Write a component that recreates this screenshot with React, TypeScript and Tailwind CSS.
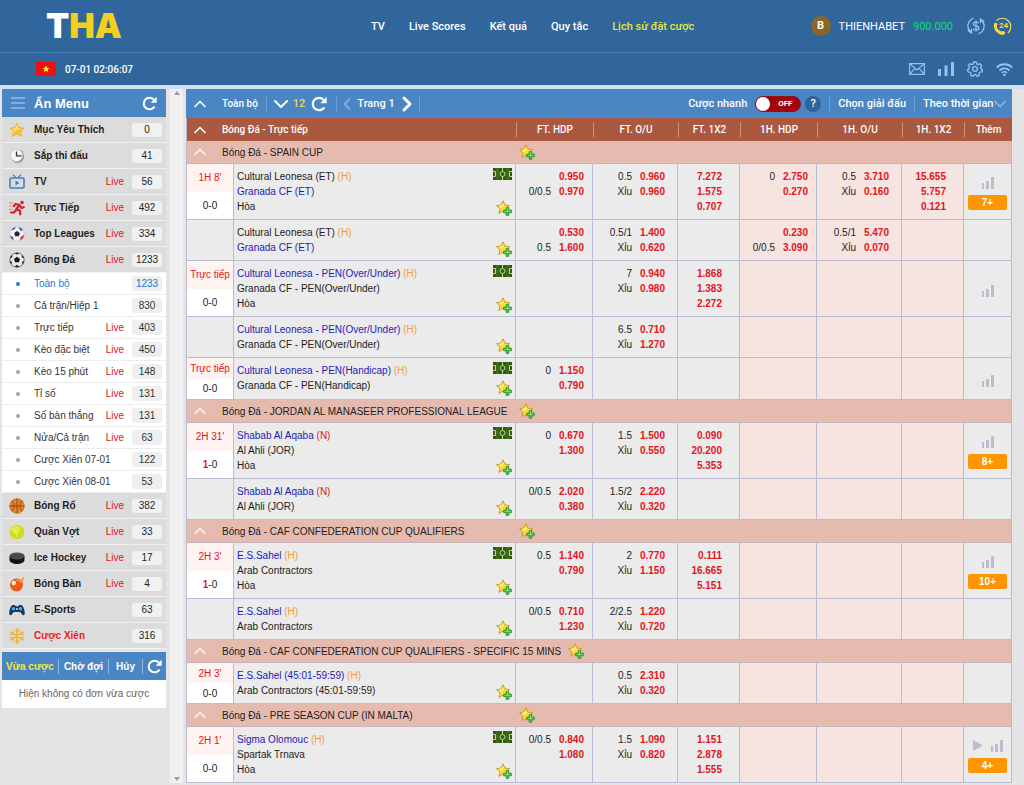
import { useState, type ReactNode } from 'react'
import { ChevronDown, ChevronLeft, ChevronRight, ChevronUp } from 'lucide-react'

type Pair = [string, string]

type Match = {
  time?: string
  score?: string
  home: string
  away: string
  tag: 'H' | 'N'
  fav: 'home' | 'away'
  draw?: boolean
  pitch?: boolean
  hdp?: Pair[]
  ou?: Pair[]
  x12?: string[]
  hdp1?: Pair[]
  ou1?: Pair[]
  x121?: string[]
  stats?: boolean
  play?: boolean
  more?: string
}

type League = { name: string; matches: Match[] }

const leagues: League[] = [
  {
    name: 'SPAIN CUP',
    matches: [
      {
        time: "1H 8'",
        score: '0-0',
        home: 'Cultural Leonesa (ET)',
        away: 'Granada CF (ET)',
        tag: 'H',
        fav: 'away',
        draw: true,
        pitch: true,
        hdp: [['', '0.950'], ['0/0.5', '0.970']],
        ou: [['0.5', '0.960'], ['Xỉu', '0.960']],
        x12: ['7.272', '1.575', '0.707'],
        hdp1: [['0', '2.750'], ['', '0.270']],
        ou1: [['0.5', '3.710'], ['Xỉu', '0.160']],
        x121: ['15.655', '5.757', '0.121'],
        stats: true,
        more: '7+',
      },
      {
        home: 'Cultural Leonesa (ET)',
        away: 'Granada CF (ET)',
        tag: 'H',
        fav: 'away',
        hdp: [['', '0.530'], ['0.5', '1.600']],
        ou: [['0.5/1', '1.400'], ['Xỉu', '0.620']],
        hdp1: [['', '0.230'], ['0/0.5', '3.090']],
        ou1: [['0.5/1', '5.470'], ['Xỉu', '0.070']],
      },
      {
        time: 'Trực tiếp',
        score: '0-0',
        home: 'Cultural Leonesa - PEN(Over/Under)',
        away: 'Granada CF - PEN(Over/Under)',
        tag: 'H',
        fav: 'home',
        draw: true,
        pitch: true,
        ou: [['7', '0.940'], ['Xỉu', '0.980']],
        x12: ['1.868', '1.383', '2.272'],
        stats: true,
      },
      {
        home: 'Cultural Leonesa - PEN(Over/Under)',
        away: 'Granada CF - PEN(Over/Under)',
        tag: 'H',
        fav: 'home',
        ou: [['6.5', '0.710'], ['Xỉu', '1.270']],
      },
      {
        time: 'Trực tiếp',
        score: '0-0',
        home: 'Cultural Leonesa - PEN(Handicap)',
        away: 'Granada CF - PEN(Handicap)',
        tag: 'H',
        fav: 'home',
        pitch: true,
        hdp: [['0', '1.150'], ['', '0.790']],
        stats: true,
      },
    ],
  },
  {
    name: 'JORDAN AL MANASEER PROFESSIONAL LEAGUE',
    matches: [
      {
        time: "2H 31'",
        score: '1-0',
        home: 'Shabab Al Aqaba',
        away: 'Al Ahli (JOR)',
        tag: 'N',
        fav: 'home',
        draw: true,
        pitch: true,
        hdp: [['0', '0.670'], ['', '1.300']],
        ou: [['1.5', '1.500'], ['Xỉu', '0.550']],
        x12: ['0.090', '20.200', '5.353'],
        stats: true,
        more: '8+',
      },
      {
        home: 'Shabab Al Aqaba',
        away: 'Al Ahli (JOR)',
        tag: 'N',
        fav: 'home',
        hdp: [['0/0.5', '2.020'], ['', '0.380']],
        ou: [['1.5/2', '2.220'], ['Xỉu', '0.320']],
      },
    ],
  },
  {
    name: 'CAF CONFEDERATION CUP QUALIFIERS',
    matches: [
      {
        time: "2H 3'",
        score: '1-0',
        home: 'E.S.Sahel',
        away: 'Arab Contractors',
        tag: 'H',
        fav: 'home',
        draw: true,
        pitch: true,
        hdp: [['0.5', '1.140'], ['', '0.790']],
        ou: [['2', '0.770'], ['Xỉu', '1.150']],
        x12: ['0.111', '16.665', '5.151'],
        stats: true,
        more: '10+',
      },
      {
        home: 'E.S.Sahel',
        away: 'Arab Contractors',
        tag: 'H',
        fav: 'home',
        hdp: [['0/0.5', '0.710'], ['', '1.230']],
        ou: [['2/2.5', '1.220'], ['Xỉu', '0.720']],
      },
    ],
  },
  {
    name: 'CAF CONFEDERATION CUP QUALIFIERS - SPECIFIC 15 MINS',
    matches: [
      {
        time: "2H 3'",
        score: '0-0',
        home: 'E.S.Sahel (45:01-59:59)',
        away: 'Arab Contractors (45:01-59:59)',
        tag: 'H',
        fav: 'home',
        ou: [['0.5', '2.310'], ['Xỉu', '0.320']],
      },
    ],
  },
  {
    name: 'PRE SEASON CUP (IN MALTA)',
    matches: [
      {
        time: "2H 1'",
        score: '0-0',
        home: 'Sigma Olomouc',
        away: 'Spartak Trnava',
        tag: 'H',
        fav: 'home',
        draw: true,
        pitch: true,
        hdp: [['0/0.5', '0.840'], ['', '1.080']],
        ou: [['1.5', '1.090'], ['Xỉu', '0.820']],
        x12: ['1.151', '2.878', '1.555'],
        stats: true,
        play: true,
        more: '4+',
      },
    ],
  },
]

/* ---------- icons ---------- */

function FavStar() {
  return (
    <svg width="16" height="16" viewBox="0 0 16 16" className="shrink-0">
      <path
        d="M7 .8l1.900 4.300 4.700.5-3.500 3.200 1 4.600L7 11.100l-4.100 2.300 1-4.600L.5 5.600l4.600-.5z"
        fill="#fbdc3c"
        stroke="#cf9f22"
        strokeWidth="1"
        strokeLinejoin="round"
      />
      <path d="M6.800 3l1 2.600-4 3 .4-2.300-1.700-.6 3-.3z" fill="#fff3a0" />
      <path
        d="M10.200 7.500h2.600v2.600h2.600v2.700h-2.600v2.600h-2.600v-2.600H7.600v-2.700h2.600z"
        fill="#45b845"
        stroke="#2f9433"
        strokeWidth=".8"
      />
      <path d="M11 8.500h1v2.400h2.400v.8H8.500v-.8H11z" fill="#93e07f" />
    </svg>
  )
}

function Pitch() {
  return (
    <svg width="19" height="12" viewBox="0 0 19 12" className="block">
      <rect width="19" height="12" fill="#2f5a0c" />
      <path d="M3 0h3v12H3zM13 0h3v12h-3z" fill="#3d6c14" />
      <g fill="none" stroke="#c3d6aa" strokeWidth="1">
        <circle cx="9.500" cy="6" r="2.500" />
        <path d="M9.500 0v3.500M9.500 8.500V12M0 3.500h2.500v5H0M19 3.500h-2.500v5H19" />
      </g>
    </svg>
  )
}

function Bars() {
  return (
    <svg width="12" height="12" viewBox="0 0 12 12" fill="#bdbdd0">
      <path d="M0 6h2v6H0zM4 4h3v8H4zM9 0h3v12H9z" />
    </svg>
  )
}

function Refresh({ size = 16 }: { size?: number }) {
  return (
    <svg width={size} height={size} viewBox="0 0 16 16">
      <path d="M13.300 11.300A6.200 6.200 0 1112.600 3.800" fill="none" stroke="currentColor" strokeWidth="2.200" />
      <path d="M15.600.8v6.400H9.300z" fill="currentColor" />
    </svg>
  )
}

const glyphs: Record<string, ReactNode> = {
  star: (
    <>
      <path d="M8 1l2.200 4.600 5 .5-3.700 3.500 1.100 5L8 12l-4.600 2.600 1.100-5L.8 6.100l5-.5z" fill="#fbc02f" stroke="#e7a321" strokeWidth=".6" />
      <path d="M8 2.500l1.300 3.800 3.200.6L7 8.200l-2.800 3L5 8 2.600 6.700l3.600-.6z" fill="#ffe27a" />
    </>
  ),
  clock: (
    <>
      <circle cx="8.500" cy="8.500" r="6.500" fill="#8f8f8f" />
      <circle cx="7.500" cy="7.500" r="6" fill="#f7f7f7" stroke="#c9c9c9" />
      <path d="M7.500 3.500v4.300h5" fill="none" stroke="#333" strokeWidth="1.300" />
      <path d="M11.500 1.500l3 2-1.500 1.500z" fill="#aaa" />
    </>
  ),
  tv: (
    <g fill="none" stroke="#3c82c4" strokeWidth="1.600">
      <path d="M4 .8L7 3.600M12 .8L9 3.600" strokeWidth="1.200" />
      <rect x="1" y="4" width="14" height="10" rx="1" />
      <path d="M6.500 6.400l4 2.600-4 2.600z" fill="#3c82c4" stroke="none" />
    </g>
  ),
  run: (
    <g fill="none" stroke="#d0232b" strokeWidth="2.200" strokeLinecap="round">
      <circle cx="13" cy="2.600" r="1.800" fill="#d0232b" stroke="none" />
      <path d="M10.300 5L7.500 9l3.500 2 .2 3.300M7.600 9.500L5 12.500H2M10.300 5L6.500 4 5 6.200M10.800 5.500l1.500 2.500 2.500-.8" />
      <path d="M0 3h4M.5 6h2.500M0 9.500h3.500" strokeWidth=".8" stroke="#e66a6f" />
    </g>
  ),
  league: (
    <>
      <circle cx="8" cy="8" r="7.200" fill="#f3f3f6" stroke="#b9bccb" strokeWidth=".6" />
      <path d="M8 5l2.800 2-1 3.200H6.200l-1-3.200z" fill="#20222c" />
      <path d="M2 4.500A7.200 7.200 0 016.500 1l-.5 2z" fill="#3a4db4" />
      <path d="M9.500 1a7.200 7.200 0 014.500 3.500l-2.500.2z" fill="#3a4db4" />
      <path d="M15.200 8.500a7 7 0 01-4.400 6l.8-3.200z" fill="#d6303a" />
      <path d="M.9 9.500a7 7 0 003.600 4.800l-.3-3z" fill="#3a4db4" />
    </>
  ),
  soccer: (
    <>
      <circle cx="8" cy="8" r="7.200" fill="#e9e9e9" stroke="#4a4a4a" strokeWidth=".7" />
      <path d="M8 4.800l3 2.100-1.100 3.400H6.100L5 6.900z" fill="#161616" />
      <path d="M5.600 1.200L8 2.600l2.400-1.400A7.200 7.200 0 005.600 1.200zM1 6.500l2.400-1.200L3 2.800A7.200 7.200 0 001 6.500zM15 6.500l-2.400-1.200.4-2.500A7.200 7.200 0 0115 6.500zM2.500 12.600l.5-2.800L.9 9a7.200 7.200 0 001.600 3.600zM13.500 12.600l-.5-2.800 2.100-.8a7.200 7.200 0 01-1.600 3.600zM5.500 14.800L8 12.700l2.500 2.100a7.200 7.200 0 01-5 0z" fill="#222" />
    </>
  ),
  basket: (
    <>
      <circle cx="8" cy="8" r="7.300" fill="#e8832b" stroke="#b95d14" strokeWidth=".6" />
      <path d="M8 .7v14.600M.7 8h14.600M2.800 2.800c3 3 3 7.400 0 10.400M13.200 2.800c-3 3-3 7.400 0 10.400" fill="none" stroke="#8b4310" strokeWidth=".9" />
    </>
  ),
  tennis: (
    <>
      <circle cx="8" cy="8" r="7.300" fill="#d0de1a" />
      <circle cx="7" cy="6" r="4" fill="#e2ec40" />
      <path d="M2 4.500c3.500 0 6 3.500 5.500 8.500" fill="none" stroke="#ecf27c" strokeWidth=".8" />
    </>
  ),
  puck: (
    <>
      <path d="M.5 6v4c0 2.200 3.400 4 7.500 4s7.500-1.800 7.500-4V6z" fill="#151515" />
      <ellipse cx="8" cy="6" rx="7.500" ry="3.400" fill="#4b4b4b" />
    </>
  ),
  pong: (
    <>
      <path d="M10.500 5l3.500-4 1.600 1.300L12.500 7z" fill="#f4a13c" />
      <circle cx="7.500" cy="9" r="6.500" fill="#ee5a13" />
      <circle cx="4.800" cy="7" r="2.200" fill="#fff2e6" />
      <path d="M7 4.200c2-.6 4.500.6 5.200 2.600" fill="none" stroke="#ff9b54" strokeWidth="1.300" />
    </>
  ),
  pad: (
    <>
      <path d="M3.500 3h2.300l1 1.200h2.400l1-1.200h2.300C14.500 4 16 9 15.700 12c-.2 1.500-1.800 1.500-2.700.2L11.200 10H4.800L3 12.200C2.100 13.500.5 13.500.3 12 0 9 1.500 4 3.500 3z" fill="#123a63" />
      <circle cx="4.500" cy="6.700" r="1.700" fill="#5ba7e0" />
      <circle cx="11.500" cy="6.700" r="1.700" fill="#5ba7e0" />
      <circle cx="8" cy="7" r=".9" fill="#dceeff" />
    </>
  ),
  flake: (
    <g stroke="#f8b32c" strokeWidth="1.700" strokeLinecap="round" fill="none">
      <path d="M8 1v14M2 4.500l12 7M14 4.500l-12 7" />
      <path d="M6 2l2 2 2-2M6 14l2-2 2 2M1.500 7l2.600-1-.4-2.700M14.500 9l-2.600 1 .4 2.700M1.500 9l2.600 1-.4 2.700M14.500 7l-2.600-1 .4-2.700" strokeWidth="1.100" />
    </g>
  ),
}

/* ---------- sidebar ---------- */

type MenuItem = { icon: string; label: string; live?: boolean; count: string; red?: boolean }

const topMenu: MenuItem[] = [
  { icon: 'star', label: 'Mục Yêu Thích', count: '0' },
  { icon: 'clock', label: 'Sắp thi đấu', count: '41' },
  { icon: 'tv', label: 'TV', live: true, count: '56' },
  { icon: 'run', label: 'Trực Tiếp', live: true, count: '492' },
  { icon: 'league', label: 'Top Leagues', live: true, count: '334' },
  { icon: 'soccer', label: 'Bóng Đá', live: true, count: '1233' },
]

const subMenu = [
  { label: 'Toàn bộ', live: false, count: '1233' },
  { label: 'Cả trận/Hiệp 1', live: false, count: '830' },
  { label: 'Trực tiếp', live: true, count: '403' },
  { label: 'Kèo đặc biệt', live: true, count: '450' },
  { label: 'Kèo 15 phút', live: true, count: '148' },
  { label: 'Tỉ số', live: true, count: '131' },
  { label: 'Số bàn thắng', live: true, count: '131' },
  { label: 'Nửa/Cả trận', live: true, count: '63' },
  { label: 'Cược Xiên 07-01', live: false, count: '122' },
  { label: 'Cược Xiên 08-01', live: false, count: '53' },
]

const bottomMenu: MenuItem[] = [
  { icon: 'basket', label: 'Bóng Rổ', live: true, count: '382' },
  { icon: 'tennis', label: 'Quần Vợt', live: true, count: '33' },
  { icon: 'puck', label: 'Ice Hockey', live: true, count: '17' },
  { icon: 'pong', label: 'Bóng Bàn', live: true, count: '4' },
  { icon: 'pad', label: 'E-Sports', count: '63' },
  { icon: 'flake', label: 'Cược Xiên', count: '316', red: true },
]

function SportRow({ item }: { item: MenuItem }) {
  return (
    <a
      href="#"
      className="flex h-[26px] items-center border-b border-[#f1f1f1] bg-[#dcdcdc] pr-1 pl-[7px] text-[#1e1e1e]"
    >
      <svg width="16" height="16" viewBox="0 0 16 16" className="mr-[9px] shrink-0">
        {glyphs[item.icon]}
      </svg>
      <span className={item.red ? 'flex-1 font-bold text-[#ec1c24]' : 'flex-1 font-bold'}>{item.label}</span>
      {item.live && <span className="mr-2 text-[#e5121b]">Live</span>}
      <span className="h-[14px] w-[30px] rounded-[3px] bg-[#f1f1f1] text-center leading-[14px]">{item.count}</span>
    </a>
  )
}

function Sidebar() {
  return (
    <aside className="w-[164px] shrink-0">
      <div className="flex h-7 items-center bg-[#4a86c3] px-[9px] text-white">
        <svg width="14" height="12" viewBox="0 0 14 12" stroke="#8fbdec" strokeWidth="1.500">
          <path d="M0 1h14M0 6h14M0 11h14" />
        </svg>
        <span className="ml-[9px] flex-1 text-[13px] font-bold">Ẩn Menu</span>
        <button aria-label="Làm mới menu">
          <Refresh size={15} />
        </button>
      </div>
      <nav>
        {topMenu.map((m) => (
          <SportRow key={m.label} item={m} />
        ))}
        {subMenu.map((m, i) => (
          <a
            key={m.label}
            href="#"
            className={
              i === 0
                ? 'flex h-[22px] items-center border-b border-[#ededed] bg-white pr-1 text-[#2277dd]'
                : 'flex h-[22px] items-center border-b border-[#ededed] bg-white pr-1 text-[#333]'
            }
          >
            <span
              className={
                i === 0
                  ? 'mr-[14px] ml-[14px] size-1 rounded-full bg-[#2277dd]'
                  : 'mr-[14px] ml-[14px] size-1 rounded-full bg-[#a5a5a5]'
              }
            />
            <span className="flex-1">{m.label}</span>
            {m.live && <span className="mr-2 text-[#e5121b]">Live</span>}
            <span className="h-[15px] w-[30px] rounded-[3px] bg-[#efefef] text-center leading-[15px]">{m.count}</span>
          </a>
        ))}
        {bottomMenu.map((m) => (
          <SportRow key={m.label} item={m} />
        ))}
      </nav>
      <div className="mt-[3px] flex h-7 items-center bg-[#4a86c3] font-bold whitespace-nowrap text-white">
        <button className="flex-1 text-[#f5e53b]">Vừa cược</button>
        <button className="border-x border-[#8db6df] px-[5px]">Chờ đợi</button>
        <button className="px-[7px]">Hủy</button>
        <button className="border-l border-[#8db6df] px-1" aria-label="Làm mới vé cược">
          <Refresh size={15} />
        </button>
      </div>
      <p className="h-7 bg-white text-center leading-7 text-[#666]">Hiện không có đơn vừa cược</p>
    </aside>
  )
}

/* ---------- header ---------- */

function Header() {
  return (
    <header className="bg-[#31669d] font-[Roboto,'Liberation_Sans',sans-serif] text-[11px] text-white">
      <div className="flex h-[52px] items-center pr-[11px] pl-[46px]">
        <a href="#" className="w-[325px] font-['Inter','Liberation_Sans',sans-serif] text-[34px] leading-none font-black text-[#f4cf22]">
          <span className="text-white">T</span>HA
        </a>
        <nav className="flex gap-6 font-medium whitespace-nowrap">
          <a href="#">TV</a>
          <a href="#">Live Scores</a>
          <a href="#">Kết quả</a>
          <a href="#">Quy tắc</a>
          <a href="#" className="text-[#dfe837]">Lịch sử đặt cược</a>
        </nav>
        <div className="ml-auto flex items-center">
          <span className="mr-2 size-5 rounded-full bg-[#8a6628] text-center leading-5 font-bold">B</span>
          <span>THIENHABET</span>
          <span className="ml-2 text-[#12dc6b]">900.000</span>
          <svg width="18" height="18" viewBox="0 0 18 18" fill="none" stroke="#93c1f2" strokeWidth="1.300" className="ml-[14px]">
            <path d="M6.500 1.300A8 8 0 004.200 15.400M11.500 16.700A8 8 0 0013.800 2.600" />
            <path d="M.8 13.500l3.800 2.600-.2-4.200M17.200 4.500l-3.800-2.600.2 4.200" />
            <path d="M11.700 6.300C11.200 5.300 10.200 5 9 5c-1.500 0-2.700.7-2.700 1.900C6.300 9.500 11.900 8.300 11.900 11c0 1.300-1.300 2-2.900 2-1.400 0-2.500-.5-3-1.600M9 3.500v11" />
          </svg>
          <span className="relative ml-2 size-5 text-[8px] font-bold text-[#f4d93a]">
            <svg width="20" height="20" viewBox="0 0 20 20">
              <path d="M3.500 4.500A8.300 8.300 0 1115 17" fill="none" stroke="#f4d93a" strokeWidth="1.200" />
              <path d="M1.200 7.500C2.500 6.200 4 6.500 4.400 8.500c.2 1.200-1 1.700-.6 2.800.9 2 2.200 3.200 4.200 4 1.100.4 1.700-.8 2.800-.3 1.700.9 1.800 2.300.3 3.400C7.500 20.500-.8 15 1.200 7.500z" fill="#f4d93a" />
            </svg>
            <span className="absolute top-[5px] left-[6px] leading-[10px]">24</span>
          </span>
        </div>
      </div>
      <div className="flex h-[33px] items-center border-t border-[#4d82b9] pr-[11px] pl-9">
        <svg width="20" height="14" viewBox="0 0 20 14">
          <rect width="20" height="14" fill="#ee1111" />
          <path d="M10 3.500l1 2.300 2.500.2-1.900 1.600.6 2.500L10 8.800l-2.200 1.300.6-2.500L6.500 6 9 5.800z" fill="#fff22d" />
        </svg>
        <time className="ml-[9px] text-[10px] font-medium">07-01 02:06:07</time>
        <div className="ml-auto flex items-center gap-[13px]">
          <svg width="16" height="12" viewBox="0 0 16 12" fill="none" stroke="#93c1f2" strokeWidth="1.200">
            <path d="M.6.6h14.800v10.800H.6zM.6.6L8 7 15.400.6M.6 11.400l5.200-6M15.400 11.400l-5.200-6" />
          </svg>
          <svg width="16" height="14" viewBox="0 0 16 14" fill="#93c1f2">
            <path d="M0 7h3v7H0zM6.500 3.500h3V14h-3zM13 0h3v14h-3z" />
          </svg>
          <svg width="16" height="16" viewBox="0 0 24 24" fill="none" stroke="#93c1f2" strokeWidth="2" strokeLinejoin="round">
            <path d="M10 1.500h4l.7 3 2.200 1 2.700-1.500 2.400 3-1.600 2.600.6 2.400 2.200 1-.9 3.500-2.800.2-1.600 1.800.5 3-3.300 1.400L13 20.500h-2l-2.100 2.400-3.300-1.400.5-3-1.600-1.800-2.800-.2L.8 13 3 12l.6-2.400L2 7l2.400-3 2.700 1.500 2.200-1z" />
            <circle cx="12" cy="12" r="3.500" />
          </svg>
          <svg width="17" height="15" viewBox="0 0 17 15" fill="none" stroke="#93c1f2" strokeWidth="1.800">
            <path d="M.8 5.500a10.800 10.800 0 0115.400 0M3.500 8.500a7 7 0 0110 0" />
            <path d="M5.800 11a4 4 0 015.400 0" strokeWidth="1.400" />
            <circle cx="8.500" cy="13" r="1.300" fill="#93c1f2" stroke="none" />
          </svg>
        </div>
      </div>
    </header>
  )
}

/* ---------- odds ---------- */

function Toolbar() {
  const [quick, setQuick] = useState(false)
  return (
    <div className="flex h-[29px] items-center bg-[#4a86c3] pr-[2px] pl-1 font-[Roboto,'Liberation_Sans',sans-serif] text-[11px] font-medium whitespace-nowrap text-white">
      <button aria-label="Thu gọn">
        <ChevronUp size={20} />
      </button>
      <span className="ml-3 text-[10px]">Toàn bộ</span>
      <span className="ml-2 h-4 w-px bg-[#6d9fd2]" />
      <button className="ml-[2px] flex items-center text-[#e9dc4e]">
        <ChevronDown size={24} color="white" />
        12
      </button>
      <button className="ml-[6px]" aria-label="Làm mới">
        <Refresh />
      </button>
      <span className="ml-[9px] h-4 w-px bg-[#6d9fd2]" />
      <button className="text-[#8fb9e4]" aria-label="Trang trước">
        <ChevronLeft size={20} />
      </button>
      Trang 1
      <button aria-label="Trang sau">
        <ChevronRight size={24} strokeWidth={3} />
      </button>
      <span className="h-4 w-px bg-[#6d9fd2]" />

      <label className="ml-auto flex cursor-pointer items-center gap-2">
        Cược nhanh
        <input type="checkbox" className="sr-only" checked={quick} onChange={() => setQuick(!quick)} />
        <span className="flex h-4 w-[46px] items-center rounded-full border border-[#8e1216] bg-[#a3040b] text-[8px] font-bold">
          <span className="size-[14px] rounded-full bg-white" />
          <span className="flex-1 text-center">{quick ? 'ON' : 'OFF'}</span>
        </span>
      </label>
      <button className="ml-1 size-4 rounded-full bg-[#2f6399] leading-4">?</button>
      <span className="mx-2 h-4 w-px bg-[#6d9fd2]" />
      <button>Chọn giải đấu</button>
      <span className="mx-2 h-4 w-px bg-[#6d9fd2]" />
      <span className="relative flex items-center">
        <select aria-label="Sắp xếp" className="w-[87px] appearance-none bg-transparent">
          <option>Theo thời gian</option>
        </select>
        <ChevronDown size={20} className="pointer-events-none absolute right-0 text-[#8fb9e4]" />
      </span>
    </div>
  )
}

function cellClass(pink: boolean | undefined, pad: string) {
  const base = 'border-r border-b border-[#bbbbd2] pt-[5px] text-right align-top leading-[15px] '
  return base + (pink ? 'bg-[#f6e4e1] ' : 'bg-[#ebebeb] ') + pad
}

function PairCell({ pairs, wide, pink }: { pairs?: Pair[]; wide?: boolean; pink?: boolean }) {
  return (
    <td className={cellClass(pink, wide ? 'pr-3' : 'pr-2')}>
      {pairs?.map(([line, odd], i) => (
        <div key={i} className="flex justify-end">
          <span>{line}</span>
          <a href="#" className="w-[33px] text-right font-bold text-[#e3141c]">{odd}</a>
        </div>
      ))}
    </td>
  )
}

function OneXTwoCell({ odds, pink }: { odds?: string[]; pink?: boolean }) {
  return (
    <td className={cellClass(pink, 'pr-[17px]')}>
      {odds?.map((o) => (
        <a key={o} href="#" className="block font-bold text-[#e3141c]">{o}</a>
      ))}
    </td>
  )
}

function rowHeight(m: Match) {
  if (m.draw) return 'h-14'
  return m.pitch ? 'h-[42px]' : 'h-[41px]'
}

function Score({ value }: { value: string }) {
  const [h, a] = value.split('-')
  return (
    <span>
      <span className={h !== '0' ? 'font-bold text-[#e3141c]' : ''}>{h}</span>-{a}
    </span>
  )
}

function MatchRow({ m }: { m: Match }) {
  return (
    <tr className={rowHeight(m)}>
      <td className="h-px border-r border-b border-[#bbbbd2] bg-[#ebebeb] p-0 text-center">
        {m.time && (
          <div className="flex h-full flex-col">
            <div className="flex flex-1 items-center justify-center bg-[#fff3f1] whitespace-nowrap text-[#e3141c]">{m.time}</div>
            <div className="flex flex-1 items-center justify-center bg-white">
              <Score value={m.score!} />
            </div>
          </div>
        )}
      </td>
      <td className="h-px border-r border-b border-[#bbbbd2] bg-[#ebebeb] p-0">
        <div className="flex h-full justify-between px-[3px]">
          <div className="pt-[5px] leading-[15px]">
            <div className={m.fav === 'home' ? 'text-[#1c1cb4]' : ''}>
              {m.home} <span className={m.tag === 'H' ? 'text-[#f39a3c]' : 'text-[#e3141c]'}>({m.tag})</span>
            </div>
            <div className={m.fav === 'away' ? 'text-[#1c1cb4]' : ''}>{m.away}</div>
            {m.draw && <div>Hòa</div>}
          </div>
          <div className="flex flex-col items-end pt-1 pb-[3px]">
            {m.pitch && <Pitch />}
            <button className="mt-auto" aria-label="Thêm vào yêu thích"><FavStar /></button>
          </div>
        </div>
      </td>
      <PairCell pairs={m.hdp} />
      <PairCell pairs={m.ou} wide />
      <OneXTwoCell odds={m.x12} />
      <PairCell pairs={m.hdp1} pink />
      <PairCell pairs={m.ou1} wide pink />
      <OneXTwoCell odds={m.x121} pink />
      <td className="border-r border-b border-[#bbbbd2] bg-[#ebebeb] p-0 align-middle">
        <div className="flex flex-col items-center gap-[6px]">
          {m.stats && (
            <div className={m.play ? 'flex gap-2 pt-1' : 'flex pt-1'}>
              {m.play && (
                <svg width="10" height="11" viewBox="0 0 10 11">
                  <path d="M0 0l10 5.500L0 11z" fill="#bdbdd0" />
                </svg>
              )}
              <Bars />
            </div>
          )}
          {m.more && (
            <button className="h-[15px] w-[39px] rounded-[2px] bg-[#ff9500] leading-[15px] font-bold text-white">{m.more}</button>
          )}
        </div>
      </td>
    </tr>
  )
}

const columns = ['FT. HDP', 'FT. O/U', 'FT. 1X2', '1H. HDP', '1H. O/U', '1H. 1X2', 'Thêm']

function OddsTable() {
  return (
    <table className="w-full table-fixed border-separate border-spacing-0 border-l border-[#bbbbd2]">
      <colgroup>
        <col className="w-[47px]" />
        <col />
        <col className="w-[77px]" />
        <col className="w-[85px]" />
        <col className="w-[62px]" />
        <col className="w-[77px]" />
        <col className="w-[85px]" />
        <col className="w-[62px]" />
        <col className="w-[48px]" />
      </colgroup>
      <thead>
        <tr className="h-[23px] bg-[#aa5840] font-[Roboto,'Liberation_Sans',sans-serif] text-white">
          <th colSpan={2} className="p-0 text-left font-medium">
            <div className="flex items-center pl-[3px]">
              <ChevronUp size={20} />
              <span className="ml-3">Bóng Đá - Trực tiếp</span>
            </div>
          </th>
          {columns.map((c) => (
            <th key={c} className="p-0 font-medium">
              <div className="border-l border-[#cf917d]">{c}</div>
            </th>
          ))}
        </tr>
      </thead>
      {leagues.map((l) => (
        <tbody key={l.name}>
          <tr className="h-[23px] bg-[#e6bbaf]">
            <td colSpan={9} className="border-r border-b border-[#c9b3bd] p-0">
              <div className="flex items-center pl-[3px] whitespace-nowrap">
                <ChevronUp size={20} className="text-[#fbf1ee]" />
                <span className="mr-[7px] ml-3 min-w-[290px]">Bóng Đá - {l.name}</span>
                <button aria-label="Thêm giải vào yêu thích"><FavStar /></button>
              </div>
            </td>
          </tr>
          {l.matches.map((m, i) => (
            <MatchRow key={i} m={m} />
          ))}
        </tbody>
      ))}
    </table>
  )
}

export default function App() {
  return (
    <div className="min-h-screen bg-[#e4e4e5] font-['Liberation_Sans',Arial,sans-serif] text-[10px] leading-[15px] text-[#222]">
      <Header />
      <div className="border-t-4 border-[#d3dfee]">
        <div className="flex pr-3 pb-[2px] pl-[2px]">
          <Sidebar />
          <div className="mr-[3px] ml-1 flex w-[13px] shrink-0 flex-col items-center justify-between bg-[#f0f0f0] py-[2px]">
            <svg width="6" height="4" viewBox="0 0 6 4"><path d="M3 0l3 4H0z" fill="#9a9a9a" /></svg>
            <svg width="6" height="4" viewBox="0 0 6 4"><path d="M3 4l3-4H0z" fill="#9a9a9a" /></svg>
          </div>
          <main className="min-w-0 flex-1">
            <Toolbar />
            <OddsTable />
          </main>
        </div>
      </div>
    </div>
  )
}
